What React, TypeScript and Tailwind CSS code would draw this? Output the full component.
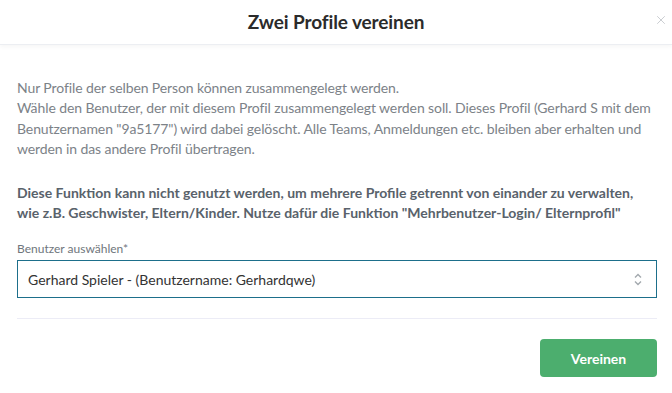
import { X } from 'lucide-react'

export default function App() {
  return (
    <div className="w-[672px] h-[393px] bg-white font-['Lato','Noto_Sans',sans-serif] overflow-hidden">
      <div className="relative h-[45px] flex items-center justify-center border-b border-[#eceef2] shadow-[0_2px_4px_rgba(0,0,0,0.04)]">
        <h1 className="text-[19px] font-bold text-[#2b2b2b] tracking-[-0.1px]">Zwei Profile vereinen</h1>
        <button className="absolute right-[4px] top-[13px] text-[#c3c7cb]">
          <X size={14} strokeWidth={1.5} />
        </button>
      </div>

      <div className="pl-[17px] pr-[15px] pt-[33px]">
        <p className="text-[14px] leading-[20.3px] tracking-[-0.1px] text-[#7c8288]">
          Nur Profile der selben Person können zusammengelegt werden.
          <br />
          Wähle den Benutzer, der mit diesem Profil zusammengelegt werden soll. Dieses Profil (Gerhard S mit dem
          Benutzernamen "9a5177") wird dabei gelöscht. Alle Teams, Anmeldungen etc. bleiben aber erhalten und
          werden in das andere Profil übertragen.
        </p>
        <p className="mt-[24px] text-[14px] leading-[20px] font-bold text-[#59626b]">
          Diese Funktion kann nicht genutzt werden, um mehrere Profile getrennt von einander zu verwalten,
          wie z.B. Geschwister, Eltern/Kinder. Nutze dafür die Funktion "Mehrbenutzer-Login/ Elternprofil"
        </p>

        <label className="block mt-[18px] text-[12px] leading-[16px] text-[#6f767c]">Benutzer auswählen*</label>
        <div className="mt-[3px] h-[38px] flex items-center justify-between border border-[#1d6f8b] pl-[10px] pr-[14px]">
          <span className="text-[14px] text-[#333]">Gerhard Spieler - (Benutzername: Gerhardqwe)</span>
          <svg width="8" height="13" viewBox="0 0 8 13" fill="none" stroke="#a3a9ae" strokeWidth="1.4">
            <path d="M1 4.5 L4 1.5 L7 4.5" />
            <path d="M1 8.5 L4 11.5 L7 8.5" />
          </svg>
        </div>

        <div className="mt-[20px] border-t border-[#ececf6]" />

        <div className="flex justify-end mt-[20px]">
          <button className="w-[117px] h-[38px] rounded-[4px] bg-[#4cae6e] text-white text-[14px] font-bold">
            Vereinen
          </button>
        </div>
      </div>
    </div>
  )
}
